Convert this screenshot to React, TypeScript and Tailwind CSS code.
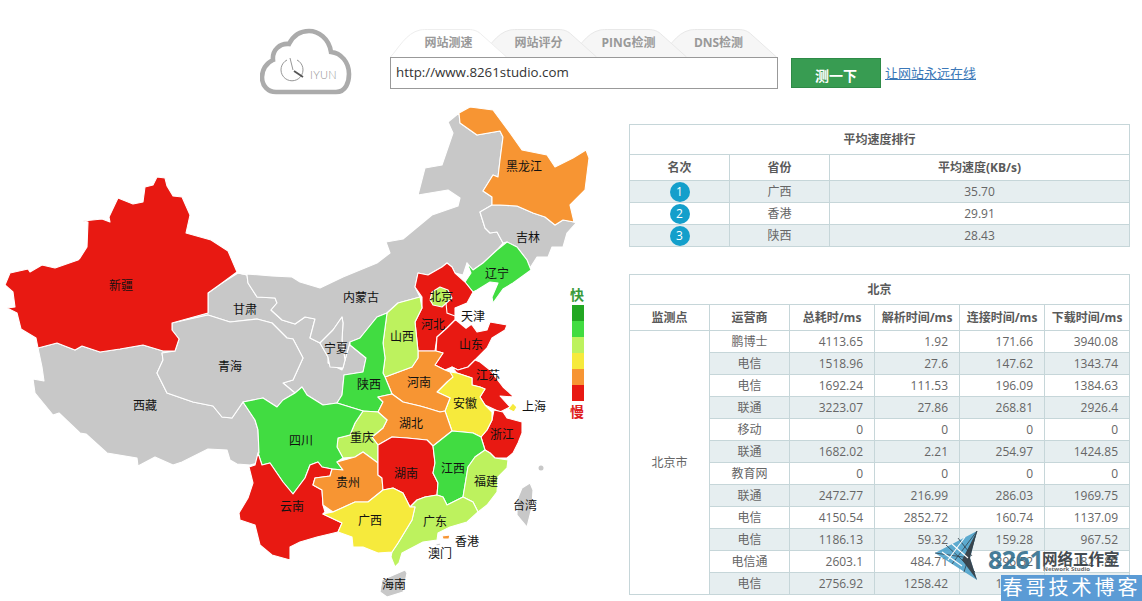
const FONT = '"Open Sans","Noto Sans CJK SC",sans-serif';
const R = '#e81912', O = '#f79533', G = '#41dc41', L = '#bdf25e', Y = '#f6ea3c', C = '#c8c8c8';

const shapes: [string, string][] = [
  [C, '172,323 208,313 208,293 222,283 238,273 247,275 248,283 257,297 275,298 277,303 271,310 282,320 295,324 305,317 315,319 310,338 320,343 328,357 328,363 342,370 345,360 350,342 350,345 366,358 363,372 344,375 342,395 337,403 323,405 307,395 302,387 295,393 283,383 293,380 303,358 293,339 287,338 272,323 257,319 230,322 208,315'],
  [C, '238,273 247,274 272,276 292,277 300,282 320,288 343,277 377,263 390,253 386,242 403,239 432,215 458,206 460,198 448,190 418,195 425,168 442,165 453,133 448,122 459,113 460,123 477,135 500,131 503,137 500,160 498,177 493,175 483,191 492,197 492,205 480,212 485,228 490,233 497,232 503,243 497,250 483,263 473,270 467,263 463,275 455,273 452,267 447,263 442,267 428,275 418,273 415,287 420,297 398,303 387,313 377,317 360,338 350,342 345,360 342,340 343,323 342,317 333,330 320,343 310,338 315,319 305,317 295,324 282,320 271,310 277,303 275,298 257,297 248,283 247,275'],
  [C, '342,317 343,323 342,340 345,360 343,368 330,367 328,357 320,343 333,330'],
  [C, '38,348 57,343 75,350 82,346 100,352 120,349 143,345 163,351 175,351 162,353 163,360 157,373 167,393 193,402 213,406 222,417 232,418 243,402 255,420 258,430 259,453 258,463 250,465 237,464 230,460 227,450 208,449 182,462 173,465 155,457 138,466 137,458 107,453 86,434 80,433 59,413 53,415 35,393 33,379 44,381 42,367'],
  [C, '172,323 208,315 230,322 257,319 272,323 287,338 293,339 303,358 293,380 283,383 295,393 283,400 277,407 263,398 243,402 232,418 222,417 213,406 193,402 167,393 157,373 163,360 162,353 175,351 179,339 172,330'],
  [C, '492,205 500,205 517,206 533,213 545,217 555,225 563,220 574,222 576,223 567,233 563,247 552,247 548,257 537,257 530,268 527,260 517,247 507,242 503,243 497,232 490,233 485,228 480,212'],
  [C, '382,580 405,570 407,573 403,592 387,597 380,592'],
  [C, '522,488 530,483 533,490 532,507 527,527 517,515 517,500'],
  [R, '157,177 165,178 167,186 173,196 182,197 190,215 186,233 211,240 228,251 237,272 222,283 208,293 208,313 172,323 172,330 179,339 175,351 163,351 143,345 120,349 100,352 82,346 75,350 57,343 38,348 36,338 21,329 17,313 7,308 15,307 13,292 5,285 10,273 28,269 30,272 42,265 55,268 78,260 80,258 87,247 88,222 83,221 102,219 110,222 109,217 118,198 133,204 143,202 145,187 153,185'],
  [O, '459,113 470,107 493,110 510,133 522,150 547,155 555,167 573,158 586,150 589,158 585,190 570,205 574,222 563,220 555,225 545,217 533,213 517,206 500,205 492,205 492,197 483,191 493,175 498,177 500,160 503,137 500,131 477,135 460,123'],
  [G, '507,242 517,247 527,260 531,270 513,283 503,289 493,303 492,297 498,283 490,282 477,290 473,292 465,282 471,273 467,263 473,270 483,263 497,250'],
  [R, '418,273 428,275 442,267 447,263 452,267 455,273 465,282 473,292 467,303 455,308 455,320 447,328 437,337 435,351 418,351 415,322 422,308 422,297 415,287'],
  [L, '430,300 432,292 440,287 448,290 452,298 442,307 433,305'],
  [R, '455,320 472,325 477,332 487,330 490,322 507,325 505,330 492,338 487,348 475,360 468,367 458,370 452,367 445,370 435,365 443,353 436,351 437,337 447,328'],
  [R, '452,367 458,370 468,367 475,360 480,362 490,370 503,387 514,397 500,396 510,407 500,412 485,405 480,397 485,389 480,387 472,385 472,378 457,373'],
  [Y, '513,403 517,407 514,412 508,409'],
  [R, '494,410 503,412 507,418 522,422 522,433 518,443 513,453 507,458 495,458 490,453 485,450 481,437 487,430 492,420'],
  [Y, '450,372 457,373 472,378 472,385 480,387 485,389 480,397 485,405 492,412 492,420 487,430 481,437 473,433 463,432 452,431 445,411 450,398 437,392 447,382'],
  [O, '418,351 436,351 443,353 435,365 445,370 450,372 453,377 447,382 437,392 450,398 445,411 440,412 427,408 420,406 403,402 392,394 385,377 412,367 418,358'],
  [L, '420,297 422,308 415,322 418,351 418,358 412,367 385,377 383,373 385,358 383,343 387,313 398,303'],
  [G, '350,342 360,338 377,317 387,313 383,343 385,358 383,373 385,377 392,394 378,397 383,402 378,412 363,411 337,403 342,395 344,375 363,372 366,358 350,345'],
  [O, '378,397 392,394 403,402 420,406 427,408 440,412 445,411 452,431 433,446 427,440 407,438 392,437 378,445 372,437 383,428 387,420 378,412 383,402'],
  [L, '363,411 378,412 387,420 383,428 372,437 378,445 378,463 363,452 355,457 343,458 337,447 338,438 350,435 355,423'],
  [G, '243,402 263,398 277,407 283,400 295,393 302,387 307,395 323,405 337,403 363,411 355,423 350,435 338,438 337,447 343,458 337,462 343,470 332,469 322,467 318,462 310,465 305,478 293,494 283,482 270,463 262,465 258,453 259,453 258,430 255,420'],
  [R, '258,453 262,465 270,463 283,482 293,494 305,478 310,465 318,462 322,467 332,469 330,476 315,478 313,485 322,490 323,505 325,512 323,514 342,523 338,532 317,537 300,542 290,547 290,560 272,555 260,545 255,525 240,520 239,513 248,498 253,483 249,467 255,465'],
  [O, '337,462 355,457 363,452 378,463 378,475 382,478 383,490 368,502 355,502 333,512 323,505 322,490 313,485 315,478 330,476 332,469 343,470'],
  [R, '378,445 392,437 407,438 427,440 433,446 435,463 433,473 438,483 437,495 425,497 417,500 410,507 403,493 393,488 383,490 382,478 378,475 378,463'],
  [G, '433,446 452,431 463,432 473,433 481,437 485,450 475,457 468,467 463,497 447,505 443,497 437,495 438,483 433,473 435,463'],
  [L, '485,450 490,453 495,458 508,460 507,468 498,477 497,492 487,505 478,512 473,502 463,497 468,467 475,457'],
  [L, '417,500 425,497 437,495 443,497 447,505 463,497 473,502 478,512 467,522 450,527 438,533 437,540 423,542 402,553 399,563 395,567 391,557 392,552 398,543 412,520 415,507 410,507'],
  [Y, '333,512 355,502 368,502 383,490 393,488 403,493 410,507 415,507 412,520 398,543 392,552 378,553 363,547 353,547 352,537 338,532 342,523 323,514'],
  [O, '442,536 450,535 449,539 443,539'],
  [C, '436,544 440,543 441,545 436,546'],
];

const labels: [string, number, number][] = [
  ['新疆', 121, 285], ['甘肃', 245, 309], ['内蒙古', 361, 297], ['青海', 230, 366], ['西藏', 145, 405], ['宁夏', 336, 348],
  ['黑龙江', 524, 166], ['吉林', 528, 237], ['辽宁', 497, 273], ['北京', 441, 296], ['天津', 473, 316], ['河北', 433, 324],
  ['山西', 402, 336], ['山东', 471, 344], ['陕西', 369, 384], ['河南', 419, 382], ['江苏', 488, 375], ['安徽', 465, 403],
  ['上海', 534, 406], ['湖北', 411, 423], ['四川', 301, 440], ['重庆', 362, 437], ['浙江', 502, 434], ['湖南', 406, 473],
  ['江西', 453, 468], ['贵州', 348, 482], ['福建', 486, 481], ['云南', 292, 506], ['广西', 370, 520], ['广东', 435, 521],
  ['香港', 467, 541], ['澳门', 440, 553], ['台湾', 525, 505], ['海南', 394, 584],
];

const legend = ['#22a722', G, L, Y, O, R];

function ChinaMap() {
  return (
    <svg width="629" height="496" viewBox="0 105 629 496" className="shrink-0">
      {shapes.map(([fill, points], i) => (
        <polygon key={i} points={points} fill={fill} stroke="#ffffff" strokeWidth="1.1" strokeLinejoin="round" />
      ))}
      <polygon points="455,308 467,303 478,320 466,329 455,320" fill="#ffffff" />
      <polyline points="446,303 447,313 455,316" fill="none" stroke="#ffffff" strokeWidth="1.1" />
      <circle cx="541" cy="468" r="2.5" fill={C} />
      {legend.map((c, i) => (
        <rect key={c} x="572" y={305 + i * 16} width="12" height="16" fill={c} />
      ))}
      <text x="577" y="294" textAnchor="middle" dominantBaseline="central" fontSize="14" fontWeight="700" fill="#3a9a3a" fontFamily={FONT}>快</text>
      <text x="577" y="411" textAnchor="middle" dominantBaseline="central" fontSize="14" fontWeight="700" fill="#e01e1e" fontFamily={FONT}>慢</text>
      {labels.map(([t, x, y]) => (
        <text key={t} x={x} y={y} textAnchor="middle" dominantBaseline="central" fontSize="12" fill="#111111" fontFamily={FONT}>{t}</text>
      ))}
    </svg>
  );
}

function Logo() {
  return (
    <svg width="92" height="68" viewBox="260 28 92 68" className="shrink-0">
      <path d="M276,92 H336 C346,92 349,82 349,74 C349,62 341,53 331,52 C329,38 318,31 309,31 C300,31 293,36 289,44 C280,43 272,50 273,60 C266,63 262,70 262,77 C262,86 268,92 276,92Z" fill="#ffffff" stroke="#ababab" strokeWidth="4.6" />
      <path d="M297,60 A11,11 0 1 1 287,60" fill="none" stroke="#8a8a8a" strokeWidth="0.9" />
      <path d="M290,58 L293,70" fill="none" stroke="#8a8a8a" strokeWidth="0.9" />
      <path d="M294,71 L303,77" fill="none" stroke="#555555" strokeWidth="1.8" />
      <text x="310" y="79" fontSize="11" fill="#8f8f8f" fontFamily='"Lato",sans-serif' fontWeight="300" letterSpacing="0.3">IYUN</text>
    </svg>
  );
}

const tabs = ['网站测速', '网站评分', 'PING检测', 'DNS检测'];
const tabZ = ['z-40', 'z-30', 'z-20', 'z-10'];

function Tabs() {
  return (
    <div className="flex h-[28px]">
      {tabs.map((t, i) => (
        <div key={t} className={`relative h-[28px] w-[117px] shrink-0 mr-[-27px] ${tabZ[i]}`}>
          <svg width="117" height="28" viewBox="0 0 117 28" className="absolute inset-0">
            <path d="M0.5,28 C8,20 16,4 30,1 C33,0.5 36,0.5 40,0.5 H78 C84,0.5 88,2 92,6 L116.5,28" fill={i === 0 ? '#ffffff' : '#f6f6f6'} stroke={i === 0 ? '#eeeeee' : '#e8e8e8'} />
          </svg>
          <div className="relative flex h-[28px] items-center justify-center pb-[1px] text-[12px] font-bold text-[#999999]">{t}</div>
        </div>
      ))}
    </div>
  );
}

const rank = [['广西', '35.70'], ['香港', '29.91'], ['陕西', '28.43']];

const rows: [string, string, string, string, string][] = [
  ['鹏博士', '4113.65', '1.92', '171.66', '3940.08'],
  ['电信', '1518.96', '27.6', '147.62', '1343.74'],
  ['电信', '1692.24', '111.53', '196.09', '1384.63'],
  ['联通', '3223.07', '27.86', '268.81', '2926.4'],
  ['移动', '0', '0', '0', '0'],
  ['联通', '1682.02', '2.21', '254.97', '1424.85'],
  ['教育网', '0', '0', '0', '0'],
  ['联通', '2472.77', '216.99', '286.03', '1969.75'],
  ['电信', '4150.54', '2852.72', '160.74', '1137.09'],
  ['电信', '1186.13', '59.32', '159.28', '967.52'],
  ['电信通', '2603.1', '484.71', '296.52', '1821.87'],
  ['电信', '2756.92', '1258.42', '175.15', '1323.35'],
];

const th = 'h-[26px] border border-[#c6d6d9] p-0 text-center text-[12px] font-bold text-[#5a5a5a]';
const title = 'h-[30px] border border-[#c6d6d9] p-0 text-center text-[12px] font-bold text-[#5a5a5a]';
const tdC = 'h-[22px] border border-[#c6d6d9] p-0 text-center text-[12px] text-[#666666]';
const tdR = 'h-[22px] border border-[#c6d6d9] p-0 pr-[11px] text-right text-[12px] text-[#666666]';

function RankTable() {
  return (
    <table className="w-[501px] table-fixed border-collapse">
      <colgroup>
        <col className="w-[100px]" />
        <col className="w-[100px]" />
        <col />
      </colgroup>
      <tbody>
        <tr><td colSpan={3} className={title}>平均速度排行</td></tr>
        <tr>
          <td className={th}>名次</td>
          <td className={th}>省份</td>
          <td className={th}>平均速度(KB/s)</td>
        </tr>
        {rank.map(([p, v], i) => (
          <tr key={p} className={i % 2 === 0 ? 'bg-[#e6eef0]' : 'bg-white'}>
            <td className={tdC}>
              <span className="mx-auto flex h-[20px] w-[20px] items-center justify-center rounded-full bg-[#149fcb] text-[12px] text-white">{i + 1}</span>
            </td>
            <td className={tdC}>{p}</td>
            <td className={tdC}>{v}</td>
          </tr>
        ))}
      </tbody>
    </table>
  );
}

function DetailTable() {
  return (
    <table className="w-[501px] table-fixed border-collapse">
      <colgroup>
        <col className="w-[80px]" />
        <col className="w-[80px]" />
        <col className="w-[85px]" />
        <col className="w-[85px]" />
        <col className="w-[85px]" />
        <col />
      </colgroup>
      <tbody>
        <tr><td colSpan={6} className={title}>北京</td></tr>
        <tr>
          {['监测点', '运营商', '总耗时/ms', '解析时间/ms', '连接时间/ms', '下载时间/ms'].map((h) => (
            <td key={h} className={th}>{h}</td>
          ))}
        </tr>
        {rows.map((r, i) => (
          <tr key={i} className={i % 2 === 1 ? 'bg-[#e6eef0]' : 'bg-white'}>
            {i === 0 && <td rowSpan={12} className="border border-[#c6d6d9] bg-white p-0 text-center text-[12px] text-[#666666]">北京市</td>}
            <td className={tdC}>{r[0]}</td>
            <td className={tdR}>{r[1]}</td>
            <td className={tdR}>{r[2]}</td>
            <td className={tdR}>{r[3]}</td>
            <td className={tdR}>{r[4]}</td>
          </tr>
        ))}
      </tbody>
    </table>
  );
}

function Watermark() {
  return (
    <>
      <div className="absolute left-[934px] top-[530px] flex items-center opacity-90">
        <svg width="46" height="52" viewBox="934 530 46 52" className="shrink-0">
          <polygon points="977,531 935,553 977,580 970,558" fill="#4ea3cc" />
          <polygon points="977,531 970,558 977,580 962,560" fill="#27333c" />
          <path d="M977,531 L952,564 M977,531 L964,572 M946,545 L975,572 M958,538 L972,556 M935,553 L970,558" fill="none" stroke="#1f2f3a" strokeWidth="0.8" />
          <path d="M952,544 L968,558 M942,552 L962,566 M965,537 L948,560" fill="none" stroke="#ffffff" strokeWidth="1.1" />
        </svg>
      </div>
      <div className="absolute left-[988px] top-[544px] text-[25px] font-bold leading-[30px] tracking-[-0.5px] text-[#33708f] opacity-90">8261</div>
      <div className="absolute left-[1042px] top-[549px] text-[15.5px] font-bold leading-[20px] text-[#333a40] opacity-90">网络工作室</div>
      <div className="absolute left-[1043px] top-[565px] text-[6px] font-bold leading-[8px] text-[#444444] opacity-80">Network Studio</div>
      <div className="absolute left-[1001px] top-[575px] flex h-[26px] w-[141px] items-center justify-center bg-[#5b9bd5] text-[20px] leading-none tracking-[3px] text-white">春哥技术博客</div>
    </>
  );
}

export default function App() {
  return (
    <div className="relative h-[601px] w-[1142px] overflow-hidden bg-white" style={{ fontFamily: FONT }}>
      <header className="flex h-[105px] pl-[260px] pt-[28px]">
        <Logo />
        <div className="ml-[38px] flex w-[388px] shrink-0 flex-col pt-[1px]">
          <Tabs />
          <div className="relative z-50 flex h-[32px] items-center border border-[#999999] bg-white pl-[5px] text-[13.3px] text-[#333333]">http://www.8261studio.com</div>
        </div>
        <div className="ml-[13px] mt-[30px] flex h-[30px] w-[90px] shrink-0 items-center justify-center border border-[#2e8a47] bg-[#389c52] pt-[5px] text-[14px] font-bold text-white">测一下</div>
        <a className="ml-[4px] mt-[35px] h-[20px] whitespace-nowrap text-[13px] leading-[20px] text-[#3b78b8] underline">让网站永远在线</a>
      </header>
      <main className="flex">
        <ChinaMap />
        <div className="flex flex-col gap-[27px] pt-[19px]">
          <RankTable />
          <DetailTable />
        </div>
      </main>
      <Watermark />
    </div>
  );
}
